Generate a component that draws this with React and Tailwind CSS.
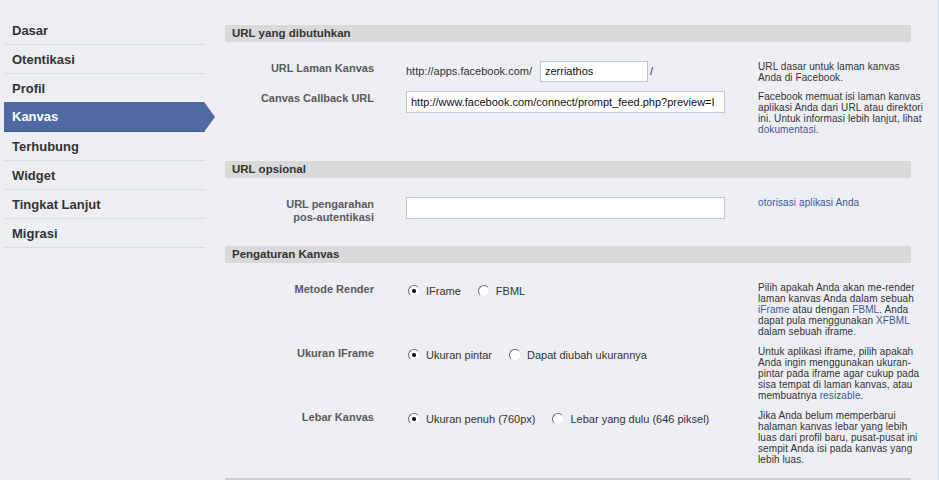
import React from 'react';

const navItems = ['Dasar', 'Otentikasi', 'Profil', 'Kanvas', 'Terhubung', 'Widget', 'Tingkat Lanjut', 'Migrasi'];

/* ── Sidebar ─────────────────────────────────────────────────────── */
const Sidebar = () => (
  <div className="w-[211px] ml-[4px] pt-[16px] shrink-0">
    {navItems.map((item) =>
      item === 'Kanvas' ? (
        <div
          key={item}
          className="h-[30px] -mt-px w-[211px] bg-[#4f6aa3] border-b border-[#3b5998] flex items-center pl-[8px] pt-[1px] text-[13px] font-bold text-white [clip-path:polygon(0_0,200px_0,211px_50%,200px_100%,0_100%)]"
        >
          {item}
        </div>
      ) : (
        <div
          key={item}
          className="h-[29px] w-[201px] border-b border-[#d8dfea] flex items-center pl-[8px] pt-[2px] text-[13px] font-bold text-[#333]"
        >
          {item}
        </div>
      )
    )}
  </div>
);

/* ── Bits ─────────────────────────────────────────────────────────── */
const SectionHeader = ({ title }) => (
  <div className="h-[17px] bg-[#d9d9d9] flex items-center pl-[7px] text-[11.5px] font-bold text-[#333]">
    {title}
  </div>
);

const Label = ({ children }) => (
  <div className="text-right text-[11px] leading-[13px] font-bold text-[#5a5a5a] pt-[1px]">{children}</div>
);

const Help = ({ children }) => (
  <div className="text-[10px] leading-[11px] tracking-[0.1px] text-[#333] whitespace-nowrap">{children}</div>
);

const A = ({ children }) => <span className="text-[#3b5998]">{children}</span>;

const Radio = ({ checked, label }) => (
  <div className="flex items-center gap-[6px]">
    <span className="w-[12px] h-[12px] rounded-full bg-white border border-t-[#6f6f6f] border-l-[#6f6f6f] border-r-[#e8e8e8] border-b-[#e8e8e8] flex items-center justify-center">
      {checked && <span className="w-[4px] h-[4px] rounded-full bg-black" />}
    </span>
    <span>{label}</span>
  </div>
);

const Row = ({ label, children, help }) => (
  <div className="grid grid-cols-[149px_320px_153px] gap-x-[32px]">
    <Label>{label}</Label>
    <div className="text-[11px] text-[#333]">{children}</div>
    <Help>{help}</Help>
  </div>
);

const Section = ({ title, children, gap = 'gap-[8px]', pb = 'pb-[24px]' }) => (
  <div>
    <SectionHeader title={title} />
    <div className={`flex flex-col pt-[19px] ${gap} ${pb}`}>{children}</div>
  </div>
);

/* ── App ───────────────────────────────────────────────────────────── */
export default function App() {
  return (
    <div className="w-[939px] h-[480px] overflow-hidden bg-[#edeff4] flex font-['Liberation_Sans',Arial,sans-serif] border-r border-r-[#d4dbe7]">
      <Sidebar />

      <div className="w-[686px] ml-[10px] pt-[25px]">
        <Section title="URL yang dibutuhkan" pb="pb-[26px]">
          <Row
            label="URL Laman Kanvas"
            help={<>URL dasar untuk laman kanvas<br />Anda di Facebook.</>}
          >
            <div className="flex items-center h-[21px]">
              <span className="mr-[8px]">http://apps.facebook.com/</span>
              <div className="w-[108px] h-[21px] bg-white border border-[#bdc7d8] flex items-center pl-[4px] text-[#111]">
                zerriathos
              </div>
              <span className="ml-[2px]">/</span>
            </div>
          </Row>
          <Row
            label="Canvas Callback URL"
            help={
              <>
                Facebook memuat isi laman kanvas<br />
                aplikasi Anda dari URL atau direktori<br />
                ini. Untuk informasi lebih lanjut, lihat<br />
                <A>dokumentasi</A>.
              </>
            }
          >
            <div className="w-[319px] h-[22px] bg-white border border-[#bdc7d8] flex items-center pl-[4px] text-[#111] overflow-hidden whitespace-nowrap">
              http://www.facebook.com/connect/prompt_feed.php?preview=I
            </div>
          </Row>
        </Section>

        <Section title="URL opsional" pb="pb-[22px]">
          <Row label={<>URL pengarahan<br />pos-autentikasi</>} help={<A>otorisasi aplikasi Anda</A>}>
            <div className="w-[319px] h-[22px] bg-white border border-[#bdc7d8]" />
          </Row>
        </Section>

        <Section title="Pengaturan Kanvas" gap="gap-[9px]">
          <Row
            label="Metode Render"
            help={
              <>
                Pilih apakah Anda akan me-render<br />
                laman kanvas Anda dalam sebuah<br />
                <A>iFrame</A> atau dengan <A>FBML</A>. Anda<br />
                dapat pula menggunakan <A>XFBML</A><br />
                dalam sebuah iframe.
              </>
            }
          >
            <div className="flex items-center gap-[17px] pl-[2px] pt-[1px]">
              <Radio checked label="IFrame" />
              <Radio label="FBML" />
            </div>
          </Row>
          <Row
            label="Ukuran IFrame"
            help={
              <>
                Untuk aplikasi iframe, pilih apakah<br />
                Anda ingin menggunakan ukuran-<br />
                pintar pada iframe agar cukup pada<br />
                sisa tempat di laman kanvas, atau<br />
                membuatnya <A>resizable</A>.
              </>
            }
          >
            <div className="flex items-center gap-[17px] pl-[2px] pt-[1px]">
              <Radio checked label="Ukuran pintar" />
              <Radio label="Dapat diubah ukurannya" />
            </div>
          </Row>
          <Row
            label="Lebar Kanvas"
            help={
              <>
                Jika Anda belum memperbarui<br />
                halaman kanvas lebar yang lebih<br />
                luas dari profil baru, pusat-pusat ini<br />
                sempit Anda isi pada kanvas yang<br />
                lebih luas.
              </>
            }
          >
            <div className="flex items-center gap-[17px] pl-[2px] pt-[1px]">
              <Radio checked label="Ukuran penuh (760px)" />
              <Radio label="Lebar yang dulu (646 piksel)" />
            </div>
          </Row>
        </Section>
        <div className="h-[2px] bg-[#cfcfcf] -mt-[11px]" />
      </div>
    </div>
  );
}
